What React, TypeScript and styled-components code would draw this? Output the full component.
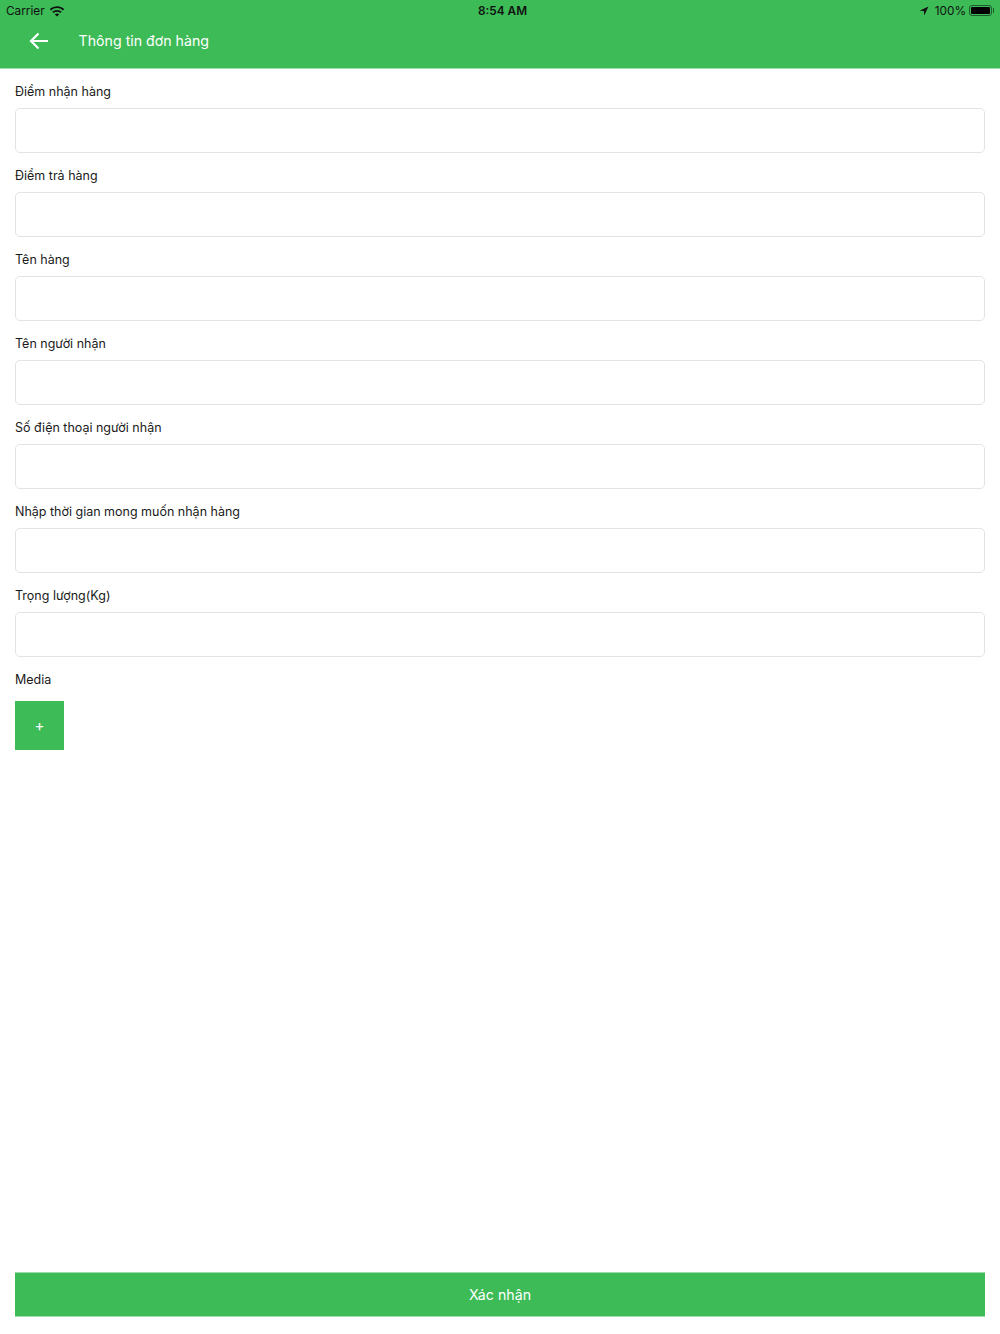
import { FC } from 'react';
import styled, { createGlobalStyle } from 'styled-components';

const GlobalStyle = createGlobalStyle`
	html, body {
		margin: 0;
		padding: 0;
		background: #fff;
	}
	* {
		box-sizing: border-box;
	}
`;

const FIELDS = [
	'Điểm nhận hàng',
	'Điểm trả hàng',
	'Tên hàng',
	'Tên người nhận',
	'Số điện thoại người nhận',
	'Nhập thời gian mong muốn nhận hàng',
	'Trọng lượng(Kg)',
];

const App: FC = () => (
	<Page>
		<GlobalStyle />
		<Header>
			<StatusBar>
				<StatusSide>
					<span>Carrier</span>
					<svg width="16" height="12" viewBox="0 0 16 12">
						<path d="M8 1.2c2.8 0 5.4 1.1 7.3 2.9l-1.3 1.4A8.7 8.7 0 0 0 8 3.1a8.7 8.7 0 0 0-6 2.4L.7 4.1A10.6 10.6 0 0 1 8 1.2z" fill="#111" />
						<path d="M8 4.9c1.8 0 3.4.7 4.7 1.8l-1.3 1.4A5 5 0 0 0 8 6.8a5 5 0 0 0-3.4 1.3L3.3 6.7A6.9 6.9 0 0 1 8 4.9z" fill="#111" />
						<path d="M8 8.5c.9 0 1.6.3 2.2.8L8 11.6 5.8 9.3c.6-.5 1.3-.8 2.2-.8z" fill="#111" />
					</svg>
				</StatusSide>
				<StatusTime>8:54 AM</StatusTime>
				<StatusRight>
					<LocationIcon width="10" height="10" viewBox="0 0 10 10">
						<path d="M9.5.5 5.2 9.5 4.9 5.1.5 4.8z" fill="#111" />
					</LocationIcon>
					<span>100%</span>
					<Battery>
						<BatteryFill />
					</Battery>
				</StatusRight>
			</StatusBar>
			<NavBar>
				<BackButton>
					<svg width="20" height="18" viewBox="0 0 20 18" fill="none">
						<path d="M19 9H2M9.5 1.5 2 9l7.5 7.5" stroke="#fff" strokeWidth="2.2" />
					</svg>
				</BackButton>
				<NavTitle>Thông tin đơn hàng</NavTitle>
			</NavBar>
		</Header>
		<Form>
			{FIELDS.map((label) => (
				<Field key={label}>
					<FieldLabel>{label}</FieldLabel>
					<FieldInput />
				</Field>
			))}
			<FieldLabel>Media</FieldLabel>
			<AddMedia>+</AddMedia>
		</Form>
		<SubmitButton>Xác nhận</SubmitButton>
	</Page>
);

const Page = styled.div`
	width: 1000px;
	height: 1334px;
	display: flex;
	flex-direction: column;
	background: #fff;
	font-family: Inter, 'Noto Sans', sans-serif;
	color: #1a1a1a;
	overflow: hidden;
`;

const Header = styled.header`
	height: 68px;
	flex: none;
	background: #3cbb56;
	box-shadow: 0 1px 0 #9ddcab;
	display: flex;
	flex-direction: column;
`;

const StatusBar = styled.div`
	height: 21px;
	padding: 0 6px;
	display: grid;
	grid-template-columns: 1fr auto 1fr;
	align-items: center;
	font-size: 11.8px;
	color: #111;
`;

const StatusSide = styled.div`
	display: flex;
	align-items: center;
	gap: 4px;
`;

const StatusTime = styled.div`
	font-weight: 600;
	padding-left: 5px;
`;

const StatusRight = styled(StatusSide)`
	justify-content: flex-end;
	gap: 3px;
`;

const LocationIcon = styled.svg`
	margin-right: 3px;
`;

const Battery = styled.div`
	position: relative;
	width: 23px;
	height: 11px;
	padding: 1px;
	margin-right: 2px;
	border: 1px solid #1f5a2c;
	border-radius: 3px;

	&::after {
		content: '';
		position: absolute;
		top: 2px;
		right: -3px;
		width: 1px;
		height: 5px;
		background: #1f5a2c;
	}
`;

const BatteryFill = styled.div`
	width: 100%;
	height: 100%;
	border-radius: 1px;
	background: #000;
`;

const NavBar = styled.div`
	flex: 1;
	display: flex;
	align-items: center;
	padding: 0 0 8px 29px;
`;

const BackButton = styled.div`
	width: 49.5px;
	height: 18px;
	display: flex;
	align-items: center;
`;

const NavTitle = styled.div`
	font-size: 14.2px;
	color: #fff;
`;

const Form = styled.main`
	flex: 1;
	padding: 1px 15px 0;
`;

const Field = styled.div`
	display: flex;
	flex-direction: column;
`;

const FieldLabel = styled.div`
	height: 39px;
	padding-top: 15px;
	font-size: 12.5px;
	line-height: 16px;
`;

const FieldInput = styled.div`
	height: 45px;
	background: #fff;
	border: 1px solid #e3e3e3;
	border-radius: 5px;
`;

const AddMedia = styled.div`
	width: 49px;
	height: 49px;
	margin-top: 5px;
	display: flex;
	align-items: center;
	justify-content: center;
	background: #3cbb56;
	color: #fff;
	font-size: 15px;
`;

const SubmitButton = styled.div`
	flex: none;
	height: 45px;
	margin: 0 15px 17px;
	display: flex;
	align-items: center;
	justify-content: center;
	background: #3cbb56;
	border-top: 1px solid #9ddcab;
	border-bottom: 1px solid #9ddcab;
	color: #fff;
	font-size: 14.2px;
`;

export default App;
